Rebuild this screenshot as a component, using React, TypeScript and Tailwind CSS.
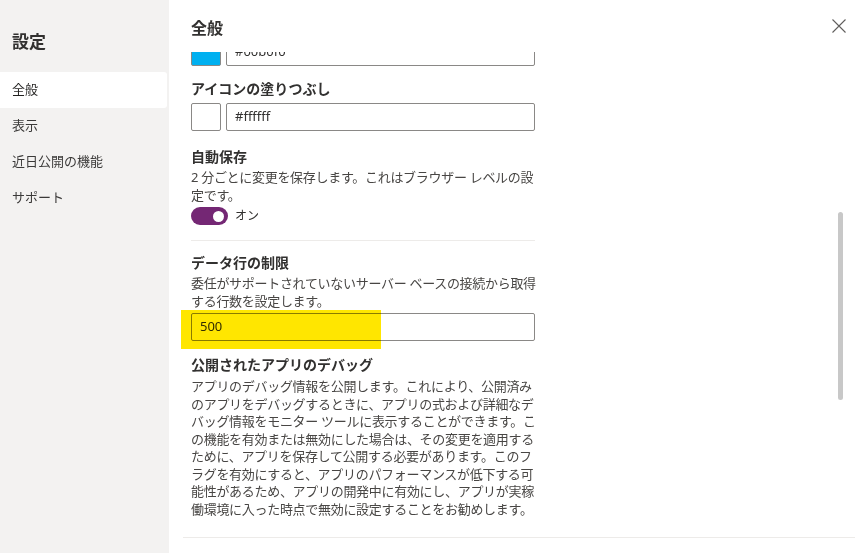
const navItems = ['全般', '表示', '近日公開の機能', 'サポート']

const debugLines = [
  'アプリのデバッグ情報を公開します。これにより、公開済み',
  'のアプリをデバッグするときに、アプリの式および詳細なデ',
  'バッグ情報をモニター ツールに表示することができます。こ',
  'の機能を有効または無効にした場合は、その変更を適用する',
  'ために、アプリを保存して公開する必要があります。このフ',
  'ラグを有効にすると、アプリのパフォーマンスが低下する可',
  '能性があるため、アプリの開発中に有効にし、アプリが実稼',
  '働環境に入った時点で無効に設定することをお勧めします。',
]

function ColorRow({ color, value, clipped }: { color: string; value: string; clipped?: boolean }) {
  return (
    <div className={`flex gap-[5px] h-[28px] ${clipped ? '-mt-[14px]' : ''}`}>
      <div className="w-[30px] h-full border border-[#8a8886] rounded-[2px]" style={{ backgroundColor: color }} />
      <div className="flex-1 h-full border border-[#8a8886] rounded-[2px] flex items-center px-[8px] text-[13px] text-[#323130]">
        {value}
      </div>
    </div>
  )
}

export default function App() {
  return (
    <div className="w-[855px] h-[553px] flex bg-white text-[#323130] font-['Noto_Sans','Noto_Sans_CJK_JP',sans-serif] overflow-hidden">
      {/* Sidebar */}
      <aside className="w-[169px] bg-[#f3f2f1] shrink-0 pr-[2px]">
        <div className="h-[72px] pl-[12px] pt-[30px] leading-[24px] text-[17px] font-semibold">設定</div>
        <nav className="flex flex-col">
          {navItems.map((item, i) => (
            <div
              key={item}
              className={`h-[36px] flex items-center pl-[12px] text-[13px] ${
                i === 0 ? 'bg-white rounded-r-[3px] text-[#201f1e]' : 'text-[#3b3a39]'
              }`}
            >
              {item}
            </div>
          ))}
        </nav>
      </aside>

      {/* Main panel */}
      <main className="relative flex-1 flex flex-col">
        <header className="h-[52px] shrink-0 flex items-start justify-between pl-[22px] pr-[9px]">
          <h1 className="text-[16px] font-semibold leading-[20px] mt-[18px]">全般</h1>
          <button className="mt-[19px] text-[#605e5c]">
            <svg width="14" height="14" viewBox="0 0 14 14" fill="none" stroke="currentColor" strokeWidth="1.1">
              <path d="M0.5 0.5L13.5 13.5M13.5 0.5L0.5 13.5" />
            </svg>
          </button>
        </header>

        <div className="flex-1 overflow-hidden pl-[22px]">
          <div className="w-[344px] flex flex-col">
            <ColorRow color="#00b0f0" value="#00b0f0" clipped />

            <div className="mt-[13px] text-[14px] font-semibold leading-[20px]">アイコンの塗りつぶし</div>
            <div className="mt-[4px]">
              <ColorRow color="#ffffff" value="#ffffff" />
            </div>

            <div className="mt-[16px] text-[14px] font-semibold leading-[20px]">自動保存</div>
            <p className="mt-[1px] text-[13px] leading-[18px] text-[#484644] tracking-[-0.3px] whitespace-nowrap">
              2 分ごとに変更を保存します。これはブラウザー レベルの設
              <br />
              定です。
            </p>
            <div className="mt-[3px] flex items-center gap-[7px]">
              <div className="w-[37px] h-[18px] rounded-full bg-[#742774] flex items-center justify-end pr-[4px]">
                <div className="w-[11px] h-[11px] rounded-full bg-white" />
              </div>
              <span className="text-[12px] leading-[18px]">オン</span>
            </div>

            <div className="mt-[15px] h-px bg-[#edebe9]" />

            <div className="mt-[12px] text-[14px] font-semibold leading-[20px]">データ行の制限</div>
            <p className="mt-[1px] text-[13px] leading-[18px] text-[#484644] tracking-[-0.3px] whitespace-nowrap">
              委任がサポートされていないサーバー ベースの接続から取得
              <br />
              する行数を設定します。
            </p>
            <div className="relative mt-[3px] h-[28px]">
              <div className="h-full border border-[#8a8886] rounded-[2px] flex items-center px-[8px] text-[13px]">
                500
              </div>
              {/* highlight annotation */}
              <div className="absolute -left-[10px] -top-[3px] w-[200px] h-[39px] bg-[#ffe600] mix-blend-multiply pointer-events-none" />
            </div>

            <div className="mt-[14px] text-[14px] font-semibold leading-[20px]">公開されたアプリのデバッグ</div>
            <p className="mt-[3px] text-[13px] leading-[17.5px] text-[#484644] tracking-[-0.3px] whitespace-nowrap">
              {debugLines.map((line, i) => (
                <span key={i} className="block">
                  {line}
                </span>
              ))}
            </p>
          </div>
        </div>

        <footer className="h-[16px] shrink-0 ml-[14px] border-t border-[#edebe9]" />

        {/* scrollbar thumb */}
        <div className="absolute left-[669px] top-[212px] w-[5px] h-[188px] rounded-full bg-[#c8c8c8]" />
      </main>
    </div>
  )
}
